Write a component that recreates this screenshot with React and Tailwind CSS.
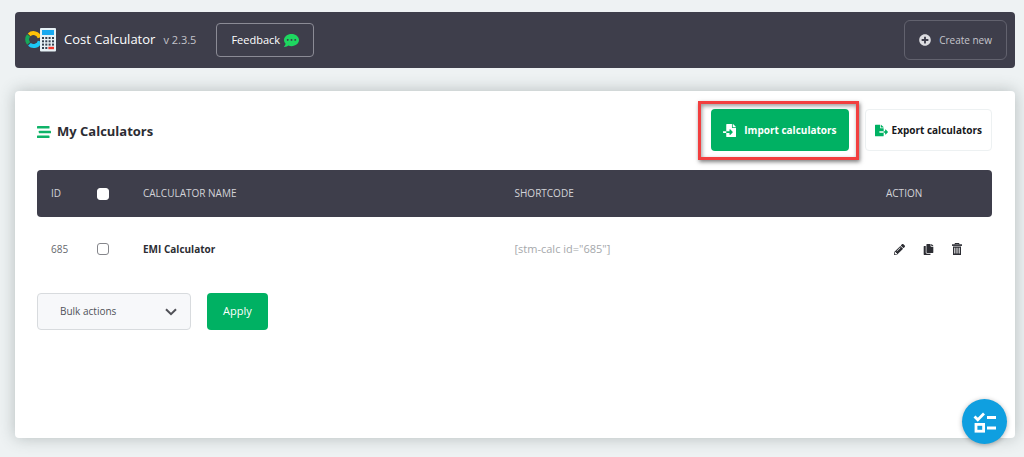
import React from "react";
import {
  FaCommentDots,
  FaPlusCircle,
  FaFileImport,
  FaFileExport,
  FaPencilAlt,
  FaCopy,
} from "react-icons/fa";

function Logo() {
  return (
    <svg className="h-6 w-8" viewBox="0 0 32 24" aria-hidden="true">
      <g fill="none" strokeWidth="4">
        <path d="M4.2 6.9A6.3 6.3 0 0 1 14.6 9.6" stroke="#ffc107" />
        <path d="M3.6 7.6A6.3 6.3 0 0 0 3.6 15.6" stroke="#17a85a" />
        <path d="M4.4 16.4A6.3 6.3 0 0 0 14.8 13.2" stroke="#1cc8f5" />
      </g>
      <rect x="15" y="0" width="16" height="23.5" rx="1" fill="#e6f1f5" />
      <rect x="17" y="2" width="12" height="5" fill="#16a9f0" />
      <g fill="#35414f">
        <rect x="17" y="9" width="2" height="2" />
        <rect x="20.3" y="9" width="2" height="2" />
        <rect x="23.6" y="9" width="2" height="2" />
        <rect x="27" y="9" width="2" height="2" />
        <rect x="17" y="12.3" width="2" height="2" />
        <rect x="20.3" y="12.3" width="2" height="2" />
        <rect x="23.6" y="12.3" width="2" height="2" />
        <rect x="27" y="12.3" width="2" height="2" />
        <rect x="17" y="15.6" width="2" height="2" />
        <rect x="20.3" y="15.6" width="2" height="2" />
        <rect x="23.6" y="15.6" width="2" height="2" />
        <rect x="27" y="15.6" width="2" height="2" />
        <rect x="17" y="19" width="2" height="2" />
        <rect x="20.3" y="19" width="2" height="2" />
      </g>
      <rect x="23.4" y="18.8" width="5.6" height="2.4" fill="#f0382c" />
    </svg>
  );
}

function BarsIcon() {
  return (
    <svg className="h-3 w-3.5" viewBox="0 0 14 12" fill="#0fb368" aria-hidden="true">
      <rect x="0" y="0" width="12.5" height="2.6" rx="0.6" />
      <rect x="1.8" y="4.7" width="12.2" height="2.6" rx="0.6" />
      <rect x="0" y="9.4" width="12.5" height="2.6" rx="0.6" />
    </svg>
  );
}

function TrashIcon() {
  return (
    <svg className="h-3 w-2.5" viewBox="0 0 10 12" aria-hidden="true">
      <path d="M3 1.5V.5h4v1" fill="none" stroke="#2c2d33" />
      <rect x="0" y="1.3" width="10" height="1.6" fill="#2c2d33" />
      <path
        d="M1 3.6h8V12H1zM2.3 4.8v5.8h1V4.8zM4.5 4.8v5.8h1V4.8zM6.7 4.8v5.8h1V4.8z"
        fill="#2c2d33"
        fillRule="evenodd"
      />
    </svg>
  );
}

function ChecklistIcon() {
  return (
    <svg className="h-6 w-6" viewBox="0 0 24 24" fill="none" stroke="#fff" strokeWidth="2.8" aria-hidden="true">
      <path d="M1.5 6.5l3.3 3.3L11 3.6M14 7.5h9M14 18h9" />
      <rect x="3" y="14.4" width="7.6" height="6.8" />
    </svg>
  );
}

const calculators = [{ id: 685, name: "EMI Calculator", shortcode: '[stm-calc id="685"]' }];

const checkbox =
  "block size-3 appearance-none rounded-[3px] border bg-white checked:bg-[#00b163]";

export default function App() {
  return (
    <div className="min-h-screen bg-[#eef2f3] pt-3 pr-[9px] pb-5 pl-[15px] font-['Open_Sans','Noto_Sans',sans-serif] text-[11px] text-[#2c2d33]">
      <header className="flex h-14 items-center rounded bg-[#3e3e4b] pr-2 pl-[10px] text-white">
        <Logo />
        <h1 className="ml-[7px] text-[13px]">Cost Calculator</h1>
        <span className="ml-2 text-[11px] text-[#c3c3ca]">v 2.3.5</span>
        <button className="ml-5 flex h-[34px] items-center gap-1 rounded border border-[#8b8b95] px-[14px] text-[11px]">
          Feedback
          <FaCommentDots className="size-[15px] text-[#1ed760]" />
        </button>
        <button className="ml-auto flex h-10 items-center gap-2 rounded-md border border-[#62626e] px-[14px] text-[10px] text-[#c5c5cb]">
          <FaPlusCircle className="size-3 text-[#dcdce0]" />
          Create new
        </button>
      </header>

      <main className="relative mt-[23px] min-h-[346px] rounded-sm bg-white pr-[23px] pl-[22px] pt-[18px] pb-[108px] shadow-[0_0_16px_rgba(60,75,75,0.32)]">
        <div className="flex items-center">
          <div className="flex items-center gap-[6px] pt-[3px]">
            <BarsIcon />
            <h2 className="text-[13px] font-bold">My Calculators</h2>
          </div>
          <div className="relative ml-auto">
            <button className="flex h-[42px] items-center gap-2 rounded bg-[#00b163] px-3 text-[10px] font-bold text-white">
              <FaFileImport className="size-[13px]" />
              Import calculators
            </button>
            <span className="pointer-events-none absolute -top-2 -right-[10px] -bottom-[9px] -left-[13px] border-[3px] border-[#f23f3f] shadow-[1px_2px_4px_rgba(0,0,0,0.5),inset_1px_2px_4px_rgba(0,0,0,0.4)]" />
          </div>
          <button className="ml-4 flex h-[42px] items-center gap-1 rounded border border-[#edf1f2] px-[9px] text-[10px] font-bold text-[#17181c]">
            <FaFileExport className="size-[13px] text-[#00b163]" />
            Export calculators
          </button>
        </div>

        <table className="mt-[19px] w-full table-fixed border-separate border-spacing-0 text-left">
          <colgroup>
            <col className="w-[60px]" />
            <col className="w-[46px]" />
            <col />
            <col />
            <col className="w-[106px]" />
          </colgroup>
          <thead>
            <tr className="h-[47px] text-[10px] text-[#d3d3d8]">
              <th className="rounded-l bg-[#3e3e4b] pl-[14px] font-normal">ID</th>
              <th className="bg-[#3e3e4b]">
                <input type="checkbox" aria-label="Select all calculators" className={checkbox + " border-white"} />
              </th>
              <th className="bg-[#3e3e4b] font-normal">CALCULATOR NAME</th>
              <th className="bg-[#3e3e4b] font-normal">SHORTCODE</th>
              <th className="rounded-r bg-[#3e3e4b] font-normal">ACTION</th>
            </tr>
          </thead>
          <tbody>
            {calculators.map((c) => (
              <tr key={c.id} className="h-16 text-[11px]">
                <td className="pl-[14px] text-[10px] text-[#66676d]">{c.id}</td>
                <td>
                  <input type="checkbox" aria-label={"Select " + c.name} className={checkbox + " border-[#85868b]"} />
                </td>
                <td className="text-[10px] font-bold">{c.name}</td>
                <td className="text-[#a5a8ab]">{c.shortcode}</td>
                <td>
                  <div className="flex items-center gap-[18px] pl-2">
                    <button aria-label="Edit"><FaPencilAlt className="size-[11px]" /></button>
                    <button aria-label="Duplicate"><FaCopy className="size-[11px]" /></button>
                    <button aria-label="Delete"><TrashIcon /></button>
                  </div>
                </td>
              </tr>
            ))}
          </tbody>
        </table>

        <div className="mt-3 flex items-center gap-4">
          <div className="relative">
            <select
              aria-label="Bulk actions"
              className="block h-[37px] w-[154px] appearance-none rounded border border-[#d8dbde] bg-[#f7f8fa] pl-[22px] text-[10px] text-[#505258]"
            >
              <option>Bulk actions</option>
              <option>Duplicate</option>
              <option>Delete</option>
            </select>
            <svg className="pointer-events-none absolute top-[15px] right-[14px] h-2 w-3" viewBox="0 0 12 8" fill="none" stroke="#505157" strokeWidth="2" aria-hidden="true">
              <path d="M1 1.2l5 5 5-5" />
            </svg>
          </div>
          <button className="h-[37px] rounded bg-[#00b163] px-4 text-[11px] text-white">Apply</button>
        </div>

        <button
          aria-label="Checklist"
          className="absolute right-2 -bottom-[6px] flex size-[45px] items-center justify-center rounded-full bg-[#0f9fe0] shadow-[0_1px_5px_rgba(0,0,0,0.3)]"
        >
          <ChecklistIcon />
        </button>
      </main>
    </div>
  );
}
